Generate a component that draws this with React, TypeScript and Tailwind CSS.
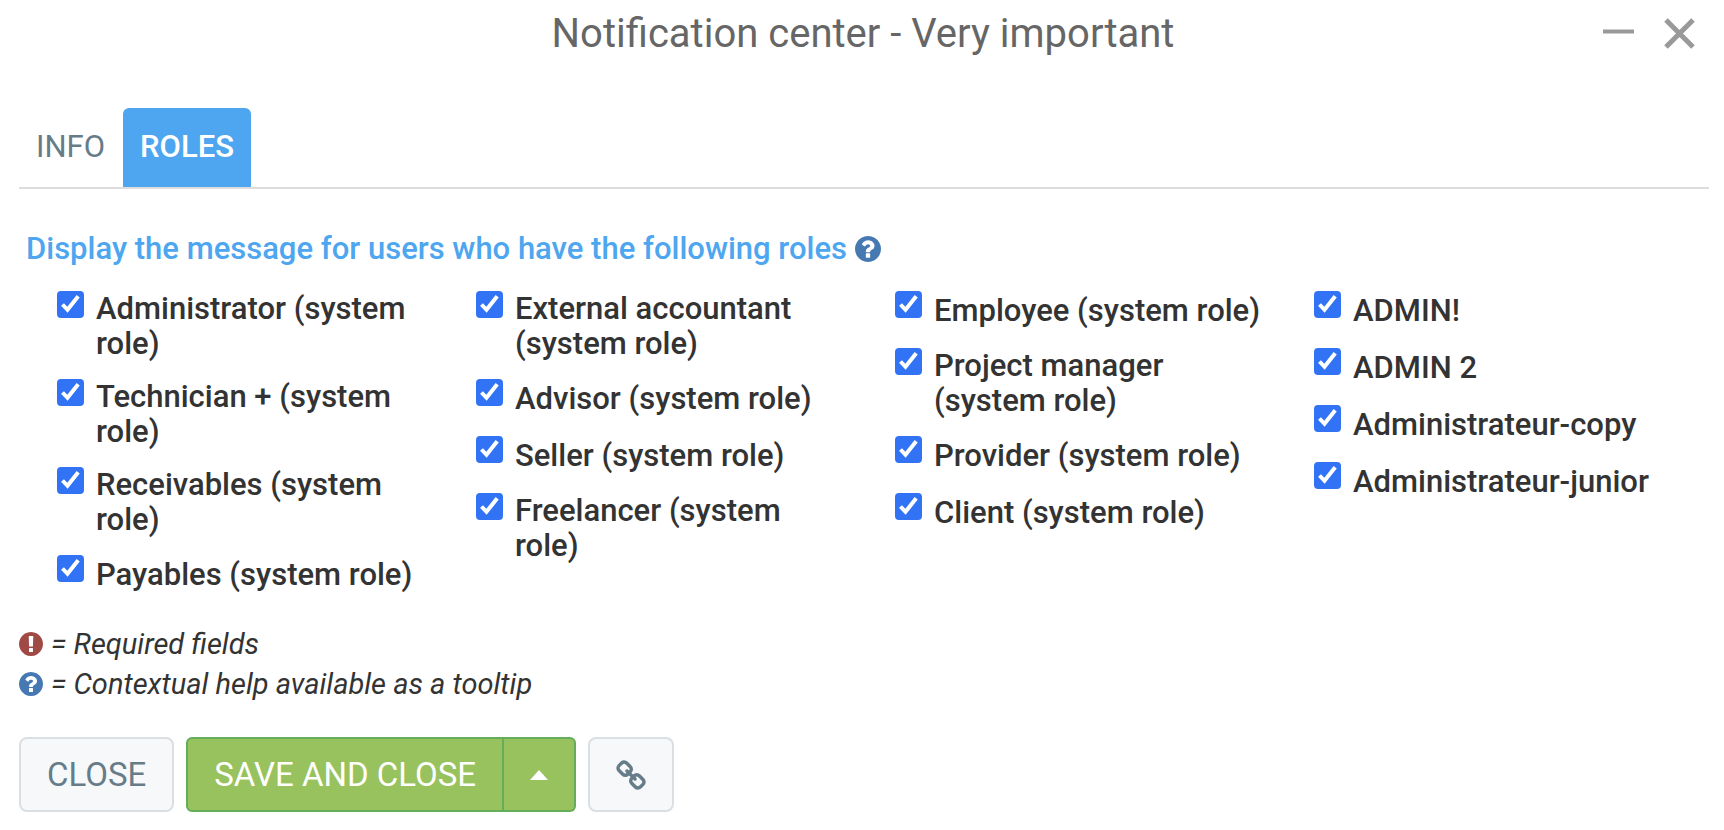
import React, { useState } from 'react';

const roleColumns = [
  [
    'Administrator (system role)',
    'Technician + (system role)',
    'Receivables (system role)',
    'Payables (system role)',
  ],
  [
    'External accountant (system role)',
    'Advisor (system role)',
    'Seller (system role)',
    'Freelancer (system role)',
  ],
  [
    'Employee (system role)',
    'Project manager (system role)',
    'Provider (system role)',
    'Client (system role)',
  ],
  ['ADMIN!', 'ADMIN 2', 'Administrateur-copy', 'Administrateur-junior'],
];

const QuestionIcon: React.FC<{ className: string }> = ({ className }) => (
  <svg viewBox="0 0 1536 1536" className={className} fill="#4678b2" aria-hidden="true">
    <path d="M896 1248v-192q0-14-9-23t-23-9H672q-14 0-23 9t-9 23v192q0 14 9 23t23 9h192q14 0 23-9t9-23zm256-672q0-88-55.500-163T958 297t-170-41q-243 0-371 213-15 24 8 42l132 100q7 6 19 6 16 0 25-12 53-68 86-92 34-24 86-24 48 0 85.500 26t37.500 59q0 38-20 61t-68 45q-63 28-115.500 86.500T640 892v36q0 14 9 23t23 9h192q14 0 23-9t9-23q0-19 21.500-49.500T972 829q32-18 49-28.500t46-35 44.500-48 28-60.500 12.500-81zm384 192q0 209-103 385.500T1153.500 1433 768 1536t-385.500-103T103 1153.500 0 768t103-385.500T382.500 103 768 0t385.500 103T1433 382.500 1536 768z" />
  </svg>
);

const ExclamationIcon: React.FC<{ className: string }> = ({ className }) => (
  <svg viewBox="0 0 1536 1536" className={className} fill="#a04a45" aria-hidden="true">
    <path d="M768 0q209 0 385.500 103T1433 382.500 1536 768t-103 385.500-279.500 279.500T768 1536t-385.500-103T103 1153.500 0 768t103-385.500T382.500 103 768 0zm128 1247v-190q0-14-9-23.500t-22-9.500H673q-13 0-23 10t-10 23v190q0 13 10 23t23 10h192q13 0 22-9.500t9-23.500zm-2-344l18-621q0-12-10-18-10-8-24-8H658q-14 0-24 8-10 6-10 18l17 621q0 10 10 17.500t24 7.500h185q14 0 23.500-7.500T894 903z" />
  </svg>
);

const LinkIcon: React.FC = () => (
  <svg viewBox="0 0 1664 1664" className="size-[30px]" fill="currentColor" aria-hidden="true">
    <path d="M1456 1216q0-40-28-68l-208-208q-28-28-68-28-42 0-72 32 3 3 19 18.500t21.500 21.500 15 19 13 25.500 3.500 27.500q0 40-28 68t-68 28q-15 0-27.500-3.500t-25.500-13-19-15-21.500-21.500-18.500-19q-33 31-33 73 0 40 28 68l206 207q27 27 68 27 40 0 68-26l147-146q28-28 28-67zM753 511q0-40-28-68L519 236q-28-28-68-28-39 0-68 27L236 381q-28 28-28 67 0 40 28 68l208 208q27 27 68 27 42 0 72-31-3-3-19-18.500T543.500 680t-15-19-13-25.500T512 608q0-40 28-68t68-28q15 0 27.500 3.500t25.500 13 19 15 21.500 21.500 18.500 19q33-31 33-74zm895 705q0 120-85 203l-147 146q-83 83-203 83-121 0-204-85l-206-207q-83-83-83-203 0-123 88-209l-88-88q-86 88-208 88-120 0-204-84L100 652Q16 568 16 448t85-203L248 99q83-83 203-83 121 0 204 85l206 207q83 83 83 203 0 123-88 209l88 88q86-88 208-88 120 0 204 84l208 208q84 84 84 204z" />
  </svg>
);

const RoleCheckbox: React.FC<{ label: string }> = ({ label }) => (
  <label className="flex gap-3 text-[31px] leading-[35px] font-medium text-[#333333]">
    <span className="grid size-[27px] shrink-0">
      <input
        type="checkbox"
        defaultChecked
        className="peer col-start-1 row-start-1 size-[27px] appearance-none rounded border-2 border-[#8a8a8a] checked:border-[#3273f6] checked:bg-[#3273f6]"
      />
      <svg
        viewBox="0 0 27 27"
        className="pointer-events-none col-start-1 row-start-1 hidden size-[27px] peer-checked:block"
        fill="none"
        stroke="white"
        strokeWidth="4"
        aria-hidden="true"
      >
        <path d="M5.500 13.500L10.500 18.800L21.200 5.300" />
      </svg>
    </span>
    <span className="flex min-h-[39px] items-center">{label}</span>
  </label>
);

const App: React.FC = () => {
  const [tab, setTab] = useState('ROLES');

  return (
    <div className="bg-white px-[19px] pb-4 font-[Roboto,sans-serif] text-[#333333]">
      <header className="flex h-[68px] items-center">
        <div className="flex-1 pl-3" />
        <h1 className="text-[40px] leading-[48px] text-[#666666]">
          Notification center - Very important
        </h1>
        <div className="flex flex-1 justify-end gap-7 pr-2.5 text-[#999999]">
          <button type="button" aria-label="Minimize">
            <svg viewBox="0 0 32 32" className="size-8" stroke="currentColor" strokeWidth="4">
              <path d="M0 13.500h31" />
            </svg>
          </button>
          <button type="button" aria-label="Close window">
            <svg viewBox="0 0 32 32" className="size-8" stroke="currentColor" strokeWidth="5">
              <path d="M3 2l27 27M30 2L3 29" />
            </svg>
          </button>
        </div>
      </header>

      <nav className="mt-10 mr-[-4px] flex gap-px border-b-2 border-[#dddddd]">
        {['INFO', 'ROLES'].map((name) => (
          <button
            key={name}
            type="button"
            onClick={() => setTab(name)}
            className={
              tab === name
                ? 'h-[79px] rounded-t-md bg-[#4da6ef] px-[17px] text-[31px] font-medium text-white'
                : 'h-[79px] rounded-t-md px-[17px] text-[31px] text-[#667c89]'
            }
          >
            {name}
          </button>
        ))}
      </nav>

      <section className="pt-10 pl-[7px]">
        <h2 className="flex items-center gap-2 text-[31px] leading-10 font-medium text-[#4da6ef]">
          Display the message for users who have the following roles
          <QuestionIcon className="size-[26px]" />
        </h2>
        <div className="mt-[22px] grid grid-cols-4 gap-[50px] pr-[22px] pl-[31px]">
          {roleColumns.map((roles, index) => (
            <div key={index} className="flex flex-col gap-[18px]">
              {roles.map((role) => (
                <RoleCheckbox key={role} label={role} />
              ))}
            </div>
          ))}
        </div>
      </section>

      <div className="mt-[30px] text-[29px] leading-10 italic">
        <p className="flex items-center gap-2">
          <ExclamationIcon className="size-6" />= Required fields
        </p>
        <p className="flex items-center gap-2">
          <QuestionIcon className="size-6" />= Contextual help available as a tooltip
        </p>
      </div>

      <footer className="mt-[33px] flex h-[75px] gap-3 text-[33px]">
        <button
          type="button"
          className="rounded-lg border-2 border-[#d9dfe3] bg-[#f6f8fa] px-[26px] text-[#667c89]"
        >
          CLOSE
        </button>
        <div className="flex text-white">
          <button
            type="button"
            className="rounded-l-md border-2 border-[#66ad59] bg-[#98c25d] px-[26px]"
          >
            SAVE AND CLOSE
          </button>
          <button
            type="button"
            aria-label="More save options"
            className="rounded-r-md border-2 border-l-0 border-[#66ad59] bg-[#98c25d] px-[26px]"
          >
            <svg viewBox="0 0 18 10" className="h-[10px] w-[18px]" fill="currentColor">
              <path d="M9 0l9 10H0z" />
            </svg>
          </button>
        </div>
        <button
          type="button"
          aria-label="Copy link"
          className="rounded-lg border-2 border-[#d9dfe3] bg-[#f6f8fa] px-[26px] text-[#667c89]"
        >
          <LinkIcon />
        </button>
      </footer>
    </div>
  );
};

export default App;
